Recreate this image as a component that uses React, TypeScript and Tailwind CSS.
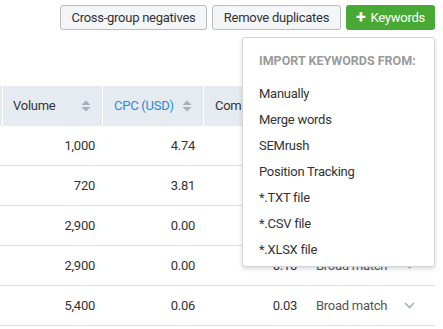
import React from 'react';

const font = { fontFamily: 'Roboto, "Open Sans", sans-serif' };

const importSources = [
  'Manually',
  'Merge words',
  'SEMrush',
  'Position Tracking',
  '*.TXT file',
  '*.CSV file',
  '*.XLSX file',
];

// rows 1-3 sit fully under the open menu, so their later cells stay empty
const rows = [
  { volume: '1,000', cpc: '4.74', comp: '', match: '' },
  { volume: '720', cpc: '3.81', comp: '', match: '' },
  { volume: '2,900', cpc: '0.00', comp: '', match: '' },
  { volume: '2,900', cpc: '0.00', comp: '0.10', match: 'Broad match' },
  { volume: '5,400', cpc: '0.06', comp: '0.03', match: 'Broad match' },
];

const SortIcon = () => (
  <svg width="10" height="12" viewBox="0 0 10 12" className="shrink-0">
    <path d="M5 0.5 L9.5 5 H0.5 Z" fill="#a6b0ba" />
    <path d="M5 11.5 L9.5 7 H0.5 Z" fill="#a6b0ba" />
  </svg>
);

const Chevron = () => (
  <svg width="11" height="7" viewBox="0 0 11 7">
    <path d="M1 1 L5.5 5.5 L10 1" fill="none" stroke="#a6b0ba" strokeWidth="1.6" />
  </svg>
);

const cols = 'grid grid-cols-[2px_100px_101px_102px_90px_40px]';

export default function App() {
  return (
    <div
      className="w-[443px] h-[329px] overflow-hidden bg-white text-[13px] tracking-[-0.02em] text-[#333]"
      style={font}
    >
      <div className="relative flex justify-end gap-[5px] pt-[5px] pr-[8px]">
        <button className="w-[147px] h-[25px] rounded-[3px] border border-[#b8bec4] bg-[#f4f5f6] text-[#333]">
          Cross-group negatives
        </button>
        <button className="w-[129px] h-[25px] rounded-[3px] border border-[#b8bec4] bg-[#f4f5f6] text-[#333]">
          Remove duplicates
        </button>
        <button className="w-[89px] h-[25px] rounded-[3px] bg-[#48a935] text-white flex items-center justify-center gap-[5px]">
          <span className="text-[18px] leading-none font-bold -mt-[2px]">+</span>
          Keywords
        </button>

        <div className="absolute z-10 right-[8px] top-[37px] w-[193px] h-[230px] bg-white border border-[#d4d7da] rounded-[3px] shadow-[0_2px_4px_rgba(0,0,0,0.15)] pl-[16px] pt-[13px]">
          <div className="text-[12.5px] font-bold text-[#9a9a9a] uppercase leading-[20px] tracking-normal">
            Import keywords from:
          </div>
          <ul className="mt-[10px]">
            {importSources.map((s) => (
              <li key={s} className="h-[26px] leading-[26px]">
                {s}
              </li>
            ))}
          </ul>
        </div>
      </div>

      <div className="mt-[56px] w-[435px]">
        <div className={`${cols} h-[40px] bg-[#e5ebf0]`}>
          <div />
          <div className="flex items-center justify-between pl-[10px] pr-[11px] border-l border-white">
            <span>Volume</span>
            <SortIcon />
          </div>
          <div className="flex items-center justify-between pl-[11px] pr-[11px] border-l border-white">
            <span className="text-[#2a8cd6]">CPC (USD)</span>
            <SortIcon />
          </div>
          <div className="flex items-center pl-[11px] border-l border-white">
            <span>Competition</span>
          </div>
          <div />
          <div />
        </div>
        {rows.map((r, i) => (
          <div key={i} className={`${cols} h-[40px] items-center border-b border-[#dedede]`}>
            <div />
            <div className="text-right pr-[7px]">{r.volume}</div>
            <div className="text-right pr-[8px]">{r.cpc}</div>
            <div className="text-right pr-[8px]">{r.comp}</div>
            <div className="pl-[11px] text-[#555]">{r.match}</div>
            <div className="flex justify-center pr-[12px]">
              {r.match && <Chevron />}
            </div>
          </div>
        ))}
      </div>
    </div>
  );
}
